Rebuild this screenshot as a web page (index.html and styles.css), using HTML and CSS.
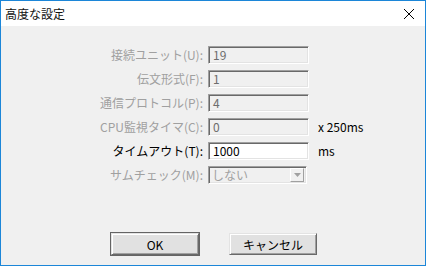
FILE: index.html
```html
<!DOCTYPE html>
<html lang="ja">
<head>
  <meta charset="UTF-8" />
  <title>高度な設定</title>
  <link rel="stylesheet" href="styles.css">
</head>
<body>
  <div class="window">
    <!-- タイトルバー -->
    <div class="titlebar">
      <span class="title">高度な設定</span>
      <svg class="close" viewBox="0 0 12 12" width="12" height="12">
        <path d="M1 1L11 11M11 1L1 11" stroke="#000" stroke-width="1" fill="none"/>
      </svg>
    </div>

    <!-- 設定項目 -->
    <div class="content">
      <div class="form">
        <label class="disabled">接続ユニット(U):</label>
        <div class="field disabled">19</div>
        <span></span>

        <label class="disabled">伝文形式(F):</label>
        <div class="field disabled">1</div>
        <span></span>

        <label class="disabled">通信プロトコル(P):</label>
        <div class="field disabled">4</div>
        <span></span>

        <label class="disabled">CPU監視タイマ(C):</label>
        <div class="field disabled">0</div>
        <span class="unit">x 250ms</span>

        <label>タイムアウト(T):</label>
        <div class="field">1000</div>
        <span class="unit">ms</span>

        <label class="disabled">サムチェック(M):</label>
        <div class="combo disabled">
          <span>しない</span>
          <span class="drop">
            <svg viewBox="0 0 7 4" width="7" height="4"><path d="M0 0H7L3.5 4Z" fill="#a0a0a0"/></svg>
          </span>
        </div>
        <span></span>
      </div>

      <div class="buttons">
        <button class="btn default">OK</button>
        <button class="btn">キャンセル</button>
      </div>
    </div>
  </div>
</body>
</html>
```

FILE: styles.css
```css
body {
  margin: 0;
  padding: 0;
  font-family: "Noto Sans CJK JP", "Noto Sans", sans-serif;
  font-size: 12px;
  overflow: hidden;
}

/* ======================
   ウィンドウ枠
   ====================== */
.window {
  width: 426px;
  height: 266px;
  box-sizing: border-box;
  border: 1px solid #1c86d8;
  background: #f0f0f0;
  display: flex;
  flex-direction: column;
}
.titlebar {
  height: 25px;
  background: #fff;
  display: flex;
  align-items: center;
  justify-content: space-between;
  padding: 0 10px 0 4px;
  flex: 0 0 auto;
}
.title {
  font-size: 12px;
  color: #111;
}
.close {
  display: block;
}

/* ======================
   設定フォーム
   ====================== */
.content {
  flex: 1;
  padding-top: 20px;
  display: flex;
  flex-direction: column;
}
.form {
  display: grid;
  grid-template-columns: 204px 101px auto;
  grid-auto-rows: 18px;
  column-gap: 3px;
  row-gap: 6px;
  align-items: center;
}
.form label {
  text-align: right;
  line-height: 18px;
  white-space: nowrap;
  padding-right: 2px;
  color: #000;
}
.form label.disabled {
  color: #a0a0a0;
}
.unit {
  margin-left: 6px;
  line-height: 18px;
  white-space: nowrap;
}

.field,
.combo {
  height: 18px;
  box-sizing: border-box;
  border: 1px solid;
  border-color: #a0a0a0 #fff #fff #a0a0a0;
  box-shadow: inset 1px 1px #696969, inset -1px -1px #e3e3e3;
  background: #fff;
  padding: 0 4px;
  line-height: 16px;
  color: #000;
}
.field.disabled {
  background: #f0f0f0;
  color: #6d6d6d;
}
.combo {
  width: 99px;
  display: flex;
  align-items: center;
  justify-content: space-between;
  padding: 0 2px 0 3px;
}
.combo.disabled {
  background: #f0f0f0;
  color: #a0a0a0;
}
.combo .drop {
  width: 14px;
  height: 14px;
  box-sizing: border-box;
  border: 1px solid;
  border-color: #fff #a0a0a0 #a0a0a0 #fff;
  display: flex;
  align-items: center;
  justify-content: center;
}

/* ======================
   ボタン
   ====================== */
.buttons {
  display: flex;
  justify-content: center;
  gap: 30px;
  margin-top: 49px;
  padding-left: 2px;
}
.btn {
  width: 88px;
  height: 22px;
  box-sizing: border-box;
  font-family: inherit;
  font-size: 12px;
  background: #e1e1e1;
  border: 1px solid;
  border-color: #e3e3e3 #696969 #696969 #e3e3e3;
  box-shadow: inset 1px 1px #fff, inset -1px -1px #a0a0a0;
  padding: 0;
  color: #000;
}
.btn.default {
  outline: 1px solid #646464;
  outline-offset: 0;
}
```
